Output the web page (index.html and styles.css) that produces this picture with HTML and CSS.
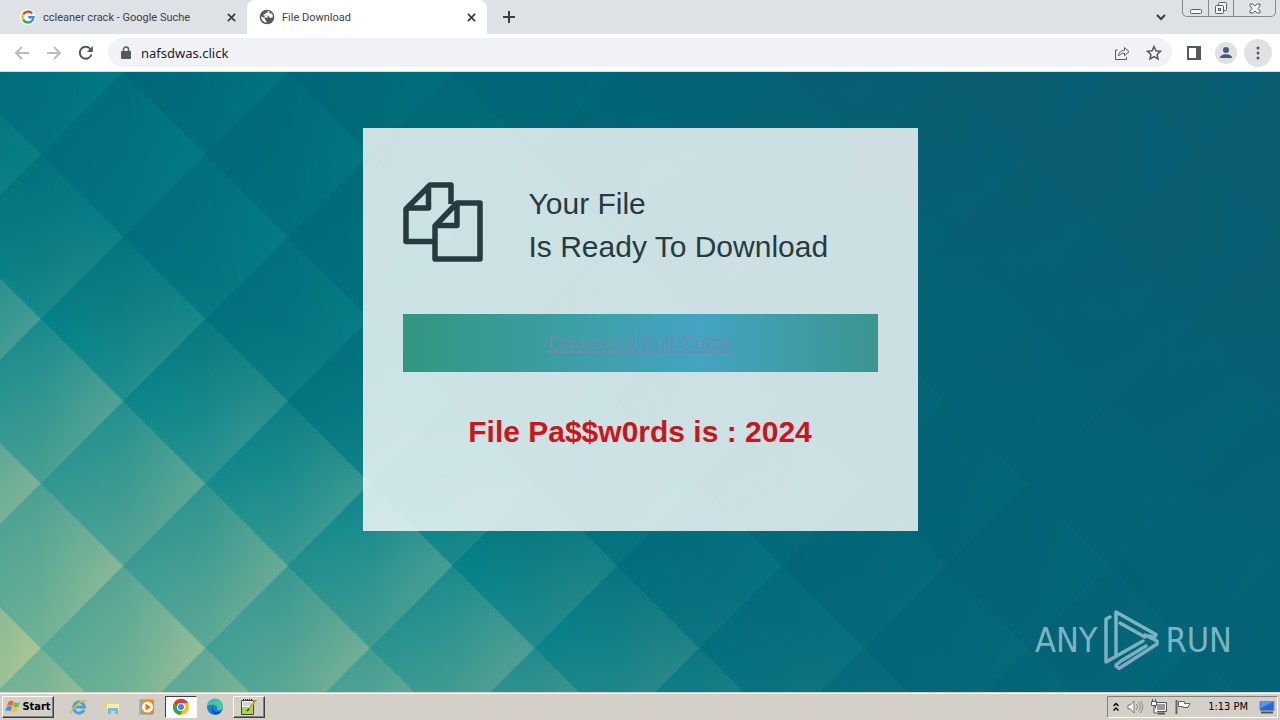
FILE: index.html
```html
<!DOCTYPE html>
<html lang="en">
<head>
<meta charset="utf-8">
<title>File Download</title>
<link rel="stylesheet" href="styles.css">
</head>
<body>
<header class="browser">
  <div class="tabstrip">
    <div class="tab">
      <svg class="icon16" viewBox="0 0 16 16" aria-hidden="true"><circle cx="8" cy="8" r="8" fill="#fff"/><g fill="none" stroke-width="2.4"><path d="M12.1 4.4A5.5 5.5 0 0 0 3.2 5.4" stroke="#ea4335"/><path d="M3.2 5.4a5.5 5.5 0 0 0 0 5.2" stroke="#fbbc05"/><path d="M3.2 10.6a5.5 5.5 0 0 0 8.5 1.5" stroke="#34a853"/><path d="M11.7 12.1A5.5 5.5 0 0 0 13.5 8.2H8.2" stroke="#4285f4"/></g></svg>
      <span class="tab-title">ccleaner crack - Google Suche</span>
      <button class="close" aria-label="Close tab"><svg viewBox="0 0 10 10"><path d="M1 1l8 8M9 1L1 9"/></svg></button>
    </div>
    <div class="tab active">
      <svg class="icon16" viewBox="0 0 16 16" aria-hidden="true"><circle cx="8" cy="8" r="7.3" fill="#54575b"/><path d="M2.2 7.2L6 9.3v1.6l1.5 1.2v1.7A6 6 0 0 1 2.2 7.2zM8.5 2v1.700H6.500v1.500H4.600v1.600h4.800l1.400 2h2.400c1-1.400.6-3-.2-4.400H10.500V2.600z" fill="#fff"/><path d="M5.600 7h3v1.700h-3z" fill="#fff"/></svg>
      <span class="tab-title">File Download</span>
      <button class="close" aria-label="Close tab"><svg viewBox="0 0 10 10"><path d="M1 1l8 8M9 1L1 9"/></svg></button>
    </div>
    <button class="newtab" aria-label="New tab"><svg viewBox="0 0 12 12"><path d="M6 0v12M0 6h12"/></svg></button>
    <div class="strip-end">
      <button class="chevron" aria-label="Search tabs"><svg viewBox="0 0 10 7"><path d="M1 1l4 4 4-4"/></svg></button>
      <div class="winbtns">
        <button aria-label="Minimize"><svg viewBox="0 0 14 14"><rect x="1.500" y="8.500" width="11" height="4" rx="1"/></svg></button>
        <button aria-label="Restore"><svg viewBox="0 0 14 14"><rect x="4.500" y="1.500" width="8" height="8" rx="1"/><rect x="1.500" y="4.500" width="8" height="8" rx="1"/><rect x="4.500" y="7.500" width="2" height="2"/></svg></button>
        <button class="wide" aria-label="Close"><svg viewBox="0 0 14 14"><path d="M2 3h3l2 2 2-2h3v2L10 7.500l2 2.500v2H9L7 10l-2 2H2v-2l2-2.500L2 5z"/></svg></button>
      </div>
    </div>
  </div>
  <nav class="toolbar">
    <button class="tool faded" aria-label="Back"><svg viewBox="0 0 16 16"><path d="M15 8H2M8 2L2 8l6 6"/></svg></button>
    <button class="tool faded" aria-label="Forward"><svg viewBox="0 0 16 16"><path d="M1 8h13M8 2l6 6-6 6"/></svg></button>
    <button class="tool reload" aria-label="Reload"><svg viewBox="0 0 16 16"><path d="M13.500 9.500A6 6 0 1 1 12.500 4L14 5.500"/><path class="solid" d="M14.800 1v6h-6z"/></svg></button>
    <div class="omnibox">
      <svg class="lock" viewBox="0 0 10 14" aria-hidden="true"><rect y="5" width="10" height="8" rx="1" fill="#55585c"/><path d="M2.500 6V3.500a2.500 2.500 0 0 1 5 0V6" fill="none" stroke="#55585c" stroke-width="1.500"/></svg>
      <input class="url" aria-label="Address" value="nafsdwas.click">
      <button class="tool thin" aria-label="Share"><svg viewBox="0 0 16 16"><path d="M3.500 5H1.500v9.500h11V12M4.500 11c.3-4 2.500-5.500 6-5.700V2.500L15 6.700l-4.500 4V8.200c-2.500 0-4.500.6-6 2.800z"/></svg></button>
      <button class="tool star" aria-label="Bookmark"><svg viewBox="0 0 16 16"><path d="M8 1.500l1.900 4.300 4.600.5-3.400 3.100.9 4.600L8 11.700 4 14l.9-4.600L1.500 6.300l4.600-.5z"/></svg></button>
    </div>
    <button class="tool" aria-label="Side panel"><svg viewBox="0 0 16 16"><rect x="2" y="2" width="12" height="12"/><path class="solid" d="M10 1h5v14h-5z"/></svg></button>
    <button class="avatar" aria-label="Profile"><svg viewBox="0 0 22 22"><circle cx="11" cy="8" r="3"/><path d="M5 16c0-5 12-5 12 0z"/></svg></button>
    <button class="menu" aria-label="Menu"><svg viewBox="0 0 4 16"><circle cx="2" cy="3" r="1.500"/><circle cx="2" cy="8" r="1.500"/><circle cx="2" cy="13" r="1.500"/></svg></button>
  </nav>
</header>

<main class="page">
  <svg class="backdrop" viewBox="0 0 1280 620" preserveAspectRatio="xMinYMax slice" aria-hidden="true">
    <defs>
      <linearGradient id="dark" gradientUnits="userSpaceOnUse" x1="200" y1="-416" x2="-300" y2="444">
        <stop offset="0" stop-color="#125f6e"/><stop offset=".15" stop-color="#046575"/><stop offset=".4" stop-color="#006878"/><stop offset=".54" stop-color="#006f7c"/><stop offset=".6" stop-color="#00757f"/><stop offset=".66" stop-color="#028189"/><stop offset=".72" stop-color="#178b8c"/><stop offset=".82" stop-color="#389a93"/><stop offset="1" stop-color="#62ae98"/>
      </linearGradient>
      <linearGradient id="light" gradientUnits="userSpaceOnUse" x1="200" y1="-416" x2="-300" y2="444">
        <stop offset="0" stop-color="#046475"/><stop offset=".15" stop-color="#006a77"/><stop offset=".3" stop-color="#00737d"/><stop offset=".42" stop-color="#007a83"/><stop offset=".54" stop-color="#0a8087"/><stop offset=".59" stop-color="#1f8b8a"/><stop offset=".65" stop-color="#429b92"/><stop offset=".71" stop-color="#5da796"/><stop offset=".78" stop-color="#74af95"/><stop offset=".86" stop-color="#94bd98"/><stop offset="1" stop-color="#bccb92"/>
      </linearGradient>
      <linearGradient id="fade"><stop offset="0" stop-color="#000"/><stop offset=".5" stop-color="#555"/><stop offset="1" stop-color="#fff"/></linearGradient>
      <linearGradient id="shade"><stop offset=".35" stop-color="#00587a" stop-opacity="0"/><stop offset=".75" stop-color="#085a72" stop-opacity=".5"/></linearGradient>
      <pattern id="tiles" patternUnits="userSpaceOnUse" x="41" y="0" width="164.600" height="164.600">
        <g fill="url(#fade)">
          <path d="M0 82.300L82.300 0l82.300 82.300-82.300 82.300z"/>
          <path d="M-82.300 0L0-82.300 82.300 0 0 82.300z"/><path d="M82.300 0l82.300-82.300L246.900 0l-82.300 82.300z"/>
          <path d="M-82.300 164.600L0 82.300l82.300 82.300L0 246.900z"/><path d="M82.300 164.600l82.300-82.300 82.300 82.300-82.300 82.300z"/>
        </g>
      </pattern>
      <mask id="diamonds"><rect width="1280" height="620" fill="url(#tiles)"/></mask>
    </defs>
    <rect width="1280" height="620" fill="url(#dark)"/>
    <rect width="1280" height="620" fill="url(#light)" mask="url(#diamonds)"/>
    <rect width="1280" height="620" fill="url(#shade)"/>
  </svg>

  <section class="card">
    <div class="intro">
      <svg class="files" viewBox="0 0 80 80" aria-hidden="true"><g fill="none" stroke="#263b40" stroke-width="5.500" stroke-linejoin="round"><path d="M31 59.500H3V27L27 3h21v19"/><path d="M3 26h22.500V3"/><path d="M32 44L54 21h23v56H32z"/><path d="M32 43.500h22V21"/></g></svg>
      <h1 class="headline">Your File<br>Is Ready To Download</h1>
    </div>
    <a class="download" href="#">Download Full Crack</a>
    <p class="password">File Pa$$w0rds is : 2024</p>
  </section>

  <div class="watermark">
    <span>ANY</span>
    <svg viewBox="0 0 56 64" aria-hidden="true"><defs><linearGradient id="mark" gradientUnits="userSpaceOnUse" x1="0" y1="0" x2="0" y2="64"><stop stop-color="#79b9c4"/><stop offset="1" stop-color="#7fa9c0"/></linearGradient></defs><g fill="none" stroke="url(#mark)" stroke-width="3.500" stroke-linejoin="round" stroke-linecap="round"><path d="M13 48V4l40 22.500-1.500 3-5-1.500"/><path d="M17 15l25 14"/><path d="M7 9L3 11v43l37-21"/><path d="M13 58l3 2.500 38-24.500V33l-12-6M13 57l5-4 25-15"/></g></svg>
    <span>RUN</span>
  </div>
</main>

<footer class="taskbar">
  <button class="start"><svg viewBox="0 0 18 16" aria-hidden="true"><path d="M4 2q3-2 6 0L8 7Q5 5 2 7z" fill="#e8673a"/><path d="M11 2.500q3 2 6 0l-2 5q-3 2-6 0z" fill="#7db84a"/><path d="M2 8q3-2 6 0l-2 5Q3 11 0 13z" fill="#4a8fd4"/><path d="M9 8.500q3 2 6 0l-2 5q-3 2-6 0z" fill="#f2c13c"/></svg>Start</button>
  <div class="apps">
    <button aria-label="Internet Explorer"><svg viewBox="0 0 18 18"><path d="M14 12a5.500 5.500 0 1 1 .5-3H5" fill="none" stroke="#43a5df" stroke-width="3"/><path d="M2 16C-1 12 13 0 17 3" fill="none" stroke="#e8b83c" stroke-width="1.500"/></svg></button>
    <button aria-label="File Explorer"><svg viewBox="0 0 18 18"><path d="M2 3h6l1 2h7v9H2z" fill="#ecd277"/><path d="M3 6h12v6H3z" fill="#f9edb3"/><path d="M4 16v-6h10v6h-3v-3H7v3z" fill="#78b9dc"/></svg></button>
    <button aria-label="Media Player"><svg viewBox="0 0 18 18"><path d="M1 1h14v16H1z" fill="#8fb9dc"/><path d="M3 2h13v14H3z" fill="#f28a18"/><circle cx="9.500" cy="9" r="5.500" fill="#fff"/><path d="M7.500 5.500v7L13 9z" fill="#e8740c"/></svg></button>
    <button class="pressed" aria-label="Chrome"><svg viewBox="0 0 18 18"><circle cx="9" cy="9" r="8" fill="#fbc116"/><path d="M2 5a8 8 0 0 1 14 0H9L6 11z" fill="#e33b2e"/><path d="M2 5a8 8 0 0 0 6 12l4-6H6z" fill="#2da94f"/><circle cx="9" cy="9" r="4" fill="#fff"/><circle cx="9" cy="9" r="3" fill="#4285f4"/></svg></button>
    <button aria-label="Edge"><svg viewBox="0 0 18 18"><circle cx="9" cy="9" r="8" fill="#1c7fd0"/><path d="M1 8a8 8 0 0 1 16 1c0 4-6 4-6 2 2-3-4-6-10-3z" fill="#43c9a0"/><path d="M2 6a7.800 7.800 0 0 1 10-4C8 2 5 3 2 6z" fill="#2fa9d8"/><path d="M7 8c-2 4 3 8 8 5-2 5-9 4-9-1 0-2 0-3 1-4z" fill="#124f9c"/></svg></button>
    <button class="raised" aria-label="Notepad++"><svg viewBox="0 0 18 18"><path d="M1.500 2.500h12v14h-12z" fill="#fff" stroke="#444"/><path d="M2 9h11v7H2z" fill="#a3d84b"/><path d="M3 2h10" stroke="#333" stroke-width="2" stroke-dasharray="1 1"/><path d="M3 5h9M3 7h9" stroke="#aaa"/><path d="M8 12l8-10" stroke="#d89b25" stroke-width="2"/><path d="M7 13l2-2" stroke="#333" stroke-width="1.500"/></svg></button>
  </div>
  <div class="tray">
    <button aria-label="Show hidden icons"><svg class="small" viewBox="0 0 8 10"><path d="M1.500 4L4 1.500 6.500 4M1.500 8.500L4 6l2.500 2.500" fill="none" stroke="#000" stroke-width="1.400"/></svg></button>
    <button aria-label="Volume"><svg viewBox="0 0 18 18"><path d="M2 7h2.500L8 3v12l-3.500-4H2z" fill="#fff" stroke="#777"/><path d="M10.500 6q2 3 0 6M12.500 4.500q3.500 4.500 0 9M14.500 3q4.500 6 0 12" fill="none" stroke="#888"/></svg></button>
    <button aria-label="Network"><svg viewBox="0 0 18 18"><path d="M5.500 4.500h11v9h-11z" fill="#999" stroke="#555"/><path d="M6.500 5.500h9v7h-9z" fill="none" stroke="#fff"/><path d="M8 15.500h7" stroke="#555" stroke-width="2"/><path d="M1.500 3.500h5v4h-5zM2.500 1v2M5.500 1v2M4 8v7h4" fill="#fff" stroke="#555"/></svg></button>
    <button aria-label="Action Center"><svg viewBox="0 0 18 18"><path d="M2.500 2v14" stroke="#666" stroke-width="2"/><path d="M4.500 3.500h6v2H16l-2 4H9v-1H4.500z" fill="#fff" stroke="#666"/></svg></button>
    <time class="clock">1:13 PM</time>
    <button aria-label="Show desktop"><svg viewBox="0 0 18 18"><path d="M2 3.500h14v9H2z" fill="#276bd0" stroke="#88a"/><path d="M3 4h12L3 10z" fill="#5a96e8"/><path d="M3 14.500h12" stroke="#456" stroke-width="2"/></svg></button>
  </div>
</footer>
</body>
</html>
```
FILE: styles.css
```css
* { box-sizing: border-box; }

body {
  margin: 0;
  min-height: 100vh;
  display: flex;
  flex-direction: column;
  font-family: "DejaVu Sans Condensed", "DejaVu Sans", sans-serif;
  font-size: 11px;
  color: #3c4043;
}

button {
  padding: 0;
  border: 0;
  background: none;
  color: inherit;
  font: inherit;
  display: flex;
  align-items: center;
  justify-content: center;
}

svg { display: block; flex: none; }

/* Browser frame */
.browser { background: #fff; border-bottom: 1px solid #dadce0; }

.tabstrip {
  display: flex;
  height: 34px;
  background: #dee1e6;
}

.tab {
  display: flex;
  align-items: center;
  gap: 7px;
  width: 240px;
  padding: 0 10px 0 12px;
}
.tab:first-child { width: 247px; padding-left: 20px; }
.tab.active { background: #fff; border-radius: 8px 8px 0 0; }
.tab-title {
  flex: 1;
  font-family: Roboto, sans-serif;
  white-space: nowrap;
}
.icon16 { width: 16px; height: 16px; }

.close { width: 12px; height: 16px; }
.close svg { width: 9px; height: 9px; stroke: #3c4043; stroke-width: 2; fill: none; }
.newtab { width: 44px; }
.newtab svg { width: 12px; height: 12px; stroke: #3c4043; stroke-width: 2; }

.strip-end { display: flex; margin-left: auto; padding-right: 4px; gap: 16px; }
.chevron svg { width: 10px; height: 7px; fill: none; stroke: #3c4043; stroke-width: 2; }
.winbtns {
  display: flex;
  height: 17px;
  border: 1px solid #85888f;
  border-top: 0;
  border-radius: 0 0 5px 5px;
}
.winbtns button { width: 25px; }
.winbtns button + button { border-left: 1px solid #85888f; }
.winbtns .wide { width: 42px; }
.winbtns svg { width: 14px; height: 14px; fill: #f4f5f7; stroke: #5a5e66; }

.toolbar {
  display: flex;
  align-items: center;
  height: 37px;
  padding: 0 8px 0 6px;
}
.tool { width: 32px; height: 28px; }
.tool svg { width: 16px; height: 16px; fill: none; stroke: #55585c; stroke-width: 2; }
.tool .solid { fill: #55585c; stroke: none; }
.tool.faded svg { stroke: #babcbe; }
.tool.thin svg { stroke-width: 1; }
.tool.star svg { stroke-width: 1.5; }

.omnibox {
  flex: 1;
  display: flex;
  align-items: center;
  height: 29px;
  margin: 0 6px;
  padding: 0 2px 0 13px;
  border-radius: 15px;
  background: #f0f2f5;
}
.lock { width: 10px; height: 14px; margin-right: 10px; }
.url {
  flex: 1;
  min-width: 0;
  padding: 0;
  border: 0;
  background: none;
  font: 13px/20px "Noto Sans", sans-serif;
  color: #202124;
}
.avatar { width: 22px; height: 22px; margin-left: 5px; border-radius: 50%; background: #dfe1e5; }
.avatar svg { width: 22px; height: 22px; fill: #4b5a78; }
.menu { width: 28px; height: 28px; margin-left: 7px; border-radius: 50%; background: #e2e2e3; }
.menu svg { width: 4px; height: 16px; fill: #55585c; }

/* Page */
.page {
  position: relative;
  flex: 1;
  overflow: hidden;
  padding: 56px 20px;
  background: #006c7b;
}
.backdrop { position: absolute; inset: 0; width: 100%; height: 100%; }

.card {
  position: relative;
  max-width: 555px;
  margin: 0 auto;
  padding: 54px 40px 78px;
  background: rgba(255, 255, 255, 0.8);
  font-family: "Liberation Sans", Arial, sans-serif;
}
.intro { display: flex; align-items: flex-start; gap: 46px; }
.files { width: 80px; height: 80px; }
.headline { margin: 0; font-size: 30px; line-height: 43px; font-weight: 400; color: #263b40; }
.download {
  display: block;
  margin-top: 46px;
  background: linear-gradient(90deg, #339681, #44a4c2 62%, #3b9590);
  color: #648fb0;
  font-size: 20px;
  line-height: 58px;
  text-align: center;
}
.password {
  margin: 38px 0 0;
  color: #cb151a;
  font-size: 30px;
  font-weight: 700;
  line-height: 43px;
  text-align: center;
}

.watermark {
  position: absolute;
  right: 48px;
  bottom: 20px;
  display: flex;
  align-items: center;
  gap: 6px;
  color: #7db4c3;
  font-size: 34px;
  line-height: 64px;
}
.watermark svg { width: 56px; height: 64px; }

/* Taskbar */
.taskbar {
  display: flex;
  align-items: center;
  height: 28px;
  padding: 0 2px;
  border-top: 1px solid #d4d0c8;
  box-shadow: inset 0 1px #fff;
  background: #d4d0c8;
  color: #000;
}
.start,
.raised {
  border: 1px solid;
  border-color: #fff #404040 #404040 #fff;
  box-shadow: inset -1px -1px #808080;
}
.start { width: 52px; height: 22px; gap: 1px; font-weight: 700; }
.start svg { width: 16px; height: 16px; }
.apps { display: flex; gap: 2px; margin-left: 9px; }
.apps button { width: 32px; height: 22px; }
.apps svg, .tray svg { width: 18px; height: 18px; }
.pressed { border: 1px solid; border-color: #404040 #fff #fff #404040; background: #fff; }
.tray {
  display: flex;
  align-items: center;
  gap: 6px;
  height: 22px;
  margin-left: auto;
  padding: 0 1px 0 4px;
  border: 1px solid;
  border-color: #808080 #fff #fff #808080;
}
.tray svg.small { width: 8px; height: 10px; }
.clock { margin: 0 4px 0 10px; }
```
